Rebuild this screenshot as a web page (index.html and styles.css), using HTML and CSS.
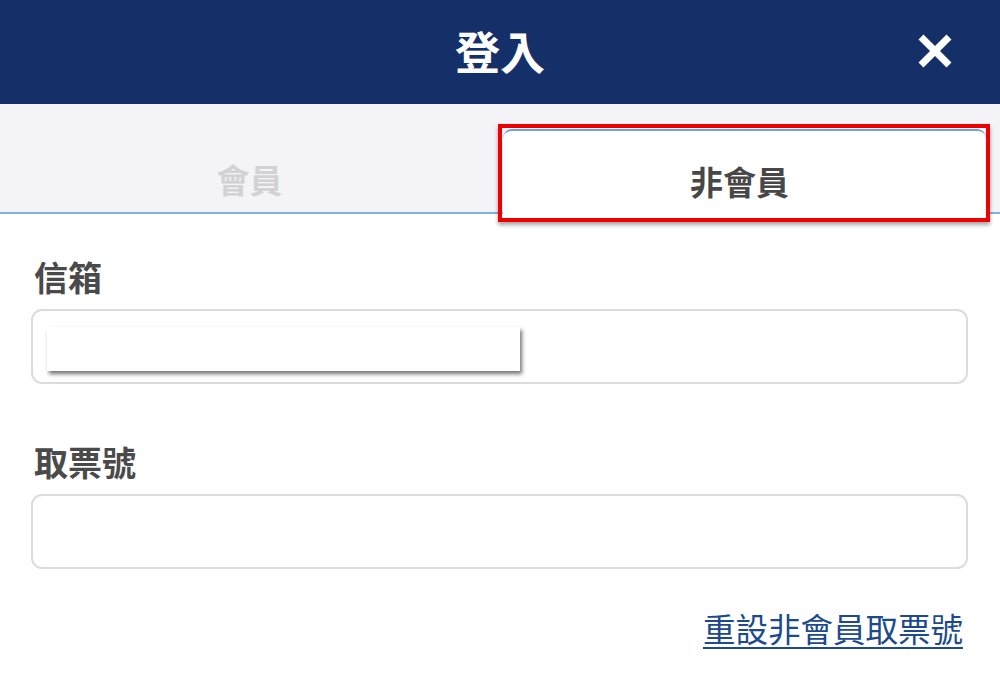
FILE: index.html
```html
<!DOCTYPE html>
<html lang="zh-Hant">
<head>
<meta charset="utf-8">
<title>登入</title>
<link rel="stylesheet" href="styles.css">
</head>
<body>
<header class="header">
  <h1 class="title">登入</h1>
  <button class="close" aria-label="關閉">
    <svg width="36" height="36" viewBox="0 0 36 36"><path d="M4 4 L32 32 M32 4 L4 32" stroke="#fff" stroke-width="7" stroke-linecap="butt"/></svg>
  </button>
</header>
<nav class="tabs">
  <div class="tab">會員</div>
  <div class="tab tab-active">非會員<span class="highlight"></span></div>
</nav>
<main class="form">
  <label class="label">信箱</label>
  <div class="input"><span class="redact"></span></div>
  <label class="label label-2">取票號</label>
  <div class="input"></div>
  <div class="link-row"><a class="link" href="#">重設非會員取票號</a></div>
</main>
</body>
</html>
```
FILE: styles.css
```css
* { box-sizing: border-box; }
html, body { margin: 0; padding: 0; }
body {
  width: 1000px;
  height: 695px;
  overflow: hidden;
  background: #fff;
  font-family: "Noto Sans CJK TC", "Noto Sans", sans-serif;
}
.header {
  height: 104px;
  background: #153069;
  display: flex;
  align-items: center;
  justify-content: center;
  position: relative;
}
.title {
  margin: 0;
  color: #fff;
  font-size: 45px;
  font-weight: 700;
  line-height: 1;
  padding-bottom: 4px;
}
.close {
  position: absolute;
  right: 47px;
  top: 33px;
  background: none;
  border: 0;
  padding: 0;
  width: 36px;
  height: 36px;
}
.close svg { display: block; }
.tabs {
  height: 110px;
  background: #f4f4f8;
  border-bottom: 2px solid #7cb3e1;
  display: flex;
  align-items: flex-end;
}
.tab {
  flex: 1;
  height: 100%;
  display: flex;
  align-items: center;
  justify-content: center;
  padding-top: 42px;
  padding-right: 4px;
  font-size: 33px;
  font-weight: 700;
  color: #d2d2d4;
  line-height: 1;
}
.tab-active {
  flex: 0 0 483px;
  height: 85px;
  margin-right: 14px;
  margin-bottom: -2px;
  padding-top: 18px;
  padding-right: 10px;
  background: #fff;
  color: #474747;
  border-top: 2px solid #6fa3d6;
  border-radius: 9px 9px 0 0;
  position: relative;
}
.highlight {
  position: absolute;
  left: -5px;
  right: -4px;
  top: -7px;
  bottom: -8px;
  border: 4px solid #ee0000;
  box-shadow: 0 3px 4px rgba(0,0,0,0.35);
}
.form {
  padding: 42px 32px 0 31px;
}
.label {
  display: block;
  font-size: 34px;
  font-weight: 700;
  color: #4a4a4a;
  line-height: 42px;
  padding-left: 3px;
}
.input {
  margin-top: 11px;
  height: 75px;
  border: 2px solid #dcdcdc;
  border-radius: 11px;
  background: #fff;
  padding: 16px 0 0 14px;
}
.redact {
  display: block;
  width: 473px;
  height: 44px;
  background: #fff;
  box-shadow: 2px 3px 4px rgba(0,0,0,0.55);
}
.label-2 { margin-top: 57px; }
.link-row {
  margin-top: 38px;
  display: flex;
  justify-content: flex-end;
  padding-right: 5px;
}
.link {
  font-size: 32.5px;
  color: #1d4a8c;
  text-decoration: underline;
  text-underline-offset: 5px;
  text-decoration-thickness: 2px;
  line-height: 42px;
  font-weight: 400;
}
```
